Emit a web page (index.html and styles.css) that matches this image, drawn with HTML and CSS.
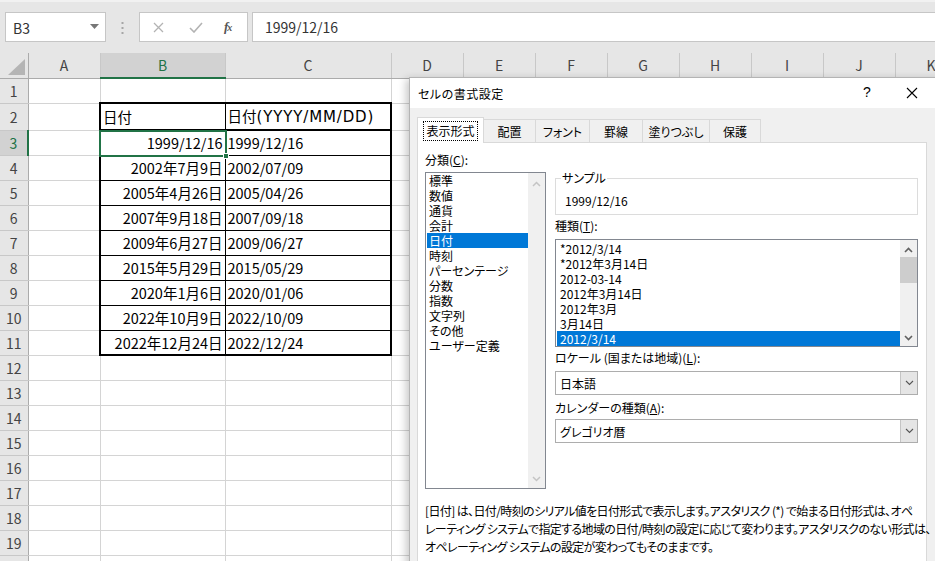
FILE: index.html
```html
<!DOCTYPE html>
<html lang="ja">
<head>
<meta charset="utf-8">
<title>Excel</title>
<link rel="stylesheet" href="styles.css">
</head>
<body>
<div class="app">
  <div class="fbar">
    <div class="namebox">
      <span class="nb-text">B3</span>
      <svg class="nb-arrow" width="9" height="5" viewBox="0 0 9 5"><polygon points="0,0 9,0 4.5,5" fill="#777"/></svg>
    </div>
    <svg class="vdots" width="3" height="12" viewBox="0 0 3 12"><rect x="0.5" y="0" width="2" height="2" fill="#a6a6a6"/><rect x="0.5" y="5" width="2" height="2" fill="#a6a6a6"/><rect x="0.5" y="10" width="2" height="2" fill="#a6a6a6"/></svg>
    <div class="fxbox">
      <svg width="11" height="11" viewBox="0 0 11 11"><path d="M1 1L10 10M10 1L1 10" stroke="#b3b3b3" stroke-width="1.3"/></svg>
      <svg width="14" height="11" viewBox="0 0 14 11"><path d="M1 6L5 10L13 1" stroke="#b3b3b3" stroke-width="1.6" fill="none"/></svg>
      <span class="fx">f<span class="fx-x">x</span></span>
    </div>
    <div class="finput">1999/12/16</div>
  </div>

  <table class="sheet">
    <colgroup>
      <col class="c-rh"><col class="c-a"><col class="c-b"><col class="c-c">
      <col class="c-n"><col class="c-n"><col class="c-n"><col class="c-n"><col class="c-n"><col class="c-n"><col class="c-n"><col class="c-n">
    </colgroup>
    <tr class="hdr">
      <th class="corner"><svg width="28" height="24" viewBox="0 0 28 24"><polygon points="25,6 25,22 8,22" fill="#b5b5b5"/></svg></th>
      <th>A</th><th class="sel-col">B</th><th>C</th><th>D</th><th>E</th><th>F</th><th>G</th><th>H</th><th>I</th><th>J</th><th>K</th>
    </tr>
    <tr><th class="rh">1</th><td></td><td></td><td></td><td></td><td></td><td></td><td></td><td></td><td></td><td></td><td></td></tr>
    <tr><th class="rh">2</th><td></td><td class="tb tl th-row">日付</td><td class="tb tr th-row">日付<span class="wide">(YYYY/MM/DD)</span></td><td></td><td></td><td></td><td></td><td></td><td></td><td></td><td></td></tr>
    <tr><th class="rh sel-row">3</th><td></td><td class="tb tl num active">1999/12/16<span class="cursor"><span class="handle"></span></span></td><td class="tb tr">1999/12/16</td><td></td><td></td><td></td><td></td><td></td><td></td><td></td><td></td></tr>
    <tr><th class="rh">4</th><td></td><td class="tb tl num">2002年7月9日</td><td class="tb tr">2002/07/09</td><td></td><td></td><td></td><td></td><td></td><td></td><td></td><td></td></tr>
    <tr><th class="rh">5</th><td></td><td class="tb tl num">2005年4月26日</td><td class="tb tr">2005/04/26</td><td></td><td></td><td></td><td></td><td></td><td></td><td></td><td></td></tr>
    <tr><th class="rh">6</th><td></td><td class="tb tl num">2007年9月18日</td><td class="tb tr">2007/09/18</td><td></td><td></td><td></td><td></td><td></td><td></td><td></td><td></td></tr>
    <tr><th class="rh">7</th><td></td><td class="tb tl num">2009年6月27日</td><td class="tb tr">2009/06/27</td><td></td><td></td><td></td><td></td><td></td><td></td><td></td><td></td></tr>
    <tr><th class="rh">8</th><td></td><td class="tb tl num">2015年5月29日</td><td class="tb tr">2015/05/29</td><td></td><td></td><td></td><td></td><td></td><td></td><td></td><td></td></tr>
    <tr><th class="rh">9</th><td></td><td class="tb tl num">2020年1月6日</td><td class="tb tr">2020/01/06</td><td></td><td></td><td></td><td></td><td></td><td></td><td></td><td></td></tr>
    <tr><th class="rh">10</th><td></td><td class="tb tl num">2022年10月9日</td><td class="tb tr">2022/10/09</td><td></td><td></td><td></td><td></td><td></td><td></td><td></td><td></td></tr>
    <tr><th class="rh">11</th><td></td><td class="tb tl bl num">2022年12月24日</td><td class="tb tr bl">2022/12/24</td><td></td><td></td><td></td><td></td><td></td><td></td><td></td><td></td></tr>
    <tr><th class="rh">12</th><td></td><td></td><td></td><td></td><td></td><td></td><td></td><td></td><td></td><td></td><td></td></tr>
    <tr><th class="rh">13</th><td></td><td></td><td></td><td></td><td></td><td></td><td></td><td></td><td></td><td></td><td></td></tr>
    <tr><th class="rh">14</th><td></td><td></td><td></td><td></td><td></td><td></td><td></td><td></td><td></td><td></td><td></td></tr>
    <tr><th class="rh">15</th><td></td><td></td><td></td><td></td><td></td><td></td><td></td><td></td><td></td><td></td><td></td></tr>
    <tr><th class="rh">16</th><td></td><td></td><td></td><td></td><td></td><td></td><td></td><td></td><td></td><td></td><td></td></tr>
    <tr><th class="rh">17</th><td></td><td></td><td></td><td></td><td></td><td></td><td></td><td></td><td></td><td></td><td></td></tr>
    <tr><th class="rh">18</th><td></td><td></td><td></td><td></td><td></td><td></td><td></td><td></td><td></td><td></td><td></td></tr>
    <tr><th class="rh">19</th><td></td><td></td><td></td><td></td><td></td><td></td><td></td><td></td><td></td><td></td><td></td></tr>
    <tr><th class="rh">20</th><td></td><td></td><td></td><td></td><td></td><td></td><td></td><td></td><td></td><td></td><td></td></tr>
  </table>

  <div class="dialog">
    <div class="titlebar">
      <span class="title">セルの書式設定</span>
      <span class="help">?</span>
      <svg class="close" width="12" height="12" viewBox="0 0 12 12"><path d="M1 1L11 11M11 1L1 11" stroke="#000" stroke-width="1.1"/></svg>
    </div>
    <div class="tabs">
      <div class="tab active"><span class="focus">表示形式</span></div>
      <div class="tab t2">配置</div>
      <div class="tab t3">フォント</div>
      <div class="tab t4">罫線</div>
      <div class="tab t5">塗りつぶし</div>
      <div class="tab t6">保護</div>
    </div>
    <div class="panel">
      <div class="cols">
        <div class="leftcol">
          <div class="lbl">分類(<u>C</u>):</div>
          <div class="catlist">
            <div class="items">
              <div class="item">標準</div>
              <div class="item">数値</div>
              <div class="item">通貨</div>
              <div class="item">会計</div>
              <div class="item selected">日付</div>
              <div class="item">時刻</div>
              <div class="item">パーセンテージ</div>
              <div class="item">分数</div>
              <div class="item">指数</div>
              <div class="item">文字列</div>
              <div class="item">その他</div>
              <div class="item">ユーザー定義</div>
            </div>
            <div class="vscroll dis">
              <svg width="9" height="6" viewBox="0 0 9 6"><polyline points="1,5 4.5,1.5 8,5" fill="none" stroke="#c4c4c4" stroke-width="1.5"/></svg>
              <svg width="9" height="6" viewBox="0 0 9 6"><polyline points="1,1 4.5,4.5 8,1" fill="none" stroke="#c4c4c4" stroke-width="1.5"/></svg>
            </div>
          </div>
        </div>
        <div class="rightcol">
          <fieldset class="sample">
            <legend>サンプル</legend>
            <div class="sample-val">1999/12/16</div>
          </fieldset>
          <div class="lbl l-type">種類(<u>T</u>):</div>
          <div class="typelist">
            <div class="items">
              <div class="item">*2012/3/14</div>
              <div class="item">*2012年3月14日</div>
              <div class="item">2012-03-14</div>
              <div class="item">2012年3月14日</div>
              <div class="item">2012年3月</div>
              <div class="item">3月14日</div>
              <div class="item selected">2012/3/14</div>
            </div>
            <div class="vscroll">
              <svg width="9" height="6" viewBox="0 0 9 6"><polyline points="1,5 4.5,1.5 8,5" fill="none" stroke="#606060" stroke-width="1.6"/></svg>
              <div class="thumb"></div>
              <div class="spacer"></div>
              <svg width="9" height="6" viewBox="0 0 9 6"><polyline points="1,1 4.5,4.5 8,1" fill="none" stroke="#606060" stroke-width="1.6"/></svg>
            </div>
          </div>
          <div class="lbl l-locale">ロケール (国または地域)(<u>L</u>):</div>
          <div class="select">
            <span class="sel-text">日本語</span>
            <span class="sel-btn"><svg width="9" height="6" viewBox="0 0 9 6"><polyline points="1,1 4.5,4.5 8,1" fill="none" stroke="#555" stroke-width="1.1"/></svg></span>
          </div>
          <div class="lbl l-cal">カレンダーの種類(<u>A</u>):</div>
          <div class="select s-cal">
            <span class="sel-text">グレゴリオ暦</span>
            <span class="sel-btn"><svg width="9" height="6" viewBox="0 0 9 6"><polyline points="1,1 4.5,4.5 8,1" fill="none" stroke="#555" stroke-width="1.1"/></svg></span>
          </div>
        </div>
      </div>
      <p class="desc">[日付] は、日付/時刻のシリアル値を日付形式で表示します。アスタリスク (*) で始まる日付形式は、オペ<br>レーティング システムで指定する地域の日付/時刻の設定に応じて変わります。アスタリスクのない形式は、<br>オペレーティング システムの設定が変わってもそのままです。</p>
    </div>
  </div>
</div>
</body>
</html>
```

FILE: styles.css
```css
* { box-sizing: border-box; }
html, body { margin: 0; padding: 0; }
body {
  width: 935px;
  height: 561px;
  overflow: hidden;
  background: #fff;
  font-family: "Noto Sans CJK JP", "Noto Sans", sans-serif;
}
.app {
  position: relative;
  width: 935px;
  height: 561px;
  overflow: hidden;
  background: #fff;
}

/* formula bar */
.fbar {
  height: 53px;
  background: #e6e6e6;
  border-top: 2px solid #f1f1f1;
  display: flex;
  align-items: flex-start;
  padding: 10px 0 0 5px;
}
.namebox {
  width: 101px;
  height: 30px;
  background: #fff;
  border: 1px solid #c6c6c6;
  display: flex;
  align-items: center;
  justify-content: space-between;
  padding: 0 6px 0 7px;
}
.nb-text { font-size: 14px; color: #333; line-height: 1; padding-top: 1px; }
.nb-arrow { margin-top: -2px; }
.vdots { margin: 10px 0 0 15px; }
.fxbox {
  margin-left: 15px;
  width: 109px;
  height: 30px;
  background: #fff;
  border: 1px solid #c6c6c6;
  display: flex;
  align-items: center;
  padding-left: 13px;
}
.fxbox svg:nth-child(1) { margin-right: 25px; }
.fxbox svg:nth-child(2) { margin-right: 21px; }
.fx {
  font-family: "Liberation Serif", serif;
  font-style: italic;
  font-weight: bold;
  font-size: 13px;
  color: #555;
  letter-spacing: -1px;
}
.fx-x { font-size: 10px; }
.finput {
  margin-left: 4px;
  flex: 1;
  height: 30px;
  background: #fff;
  border: 1px solid #c6c6c6;
  border-right: none;
  font-size: 14px;
  color: #333;
  line-height: 28px;
  padding-left: 12px;
}

/* sheet */
.sheet {
  border-collapse: collapse;
  table-layout: fixed;
  width: 967px;
  font-size: 14.5px;
  color: #000;
}
.c-rh { width: 28px; }
.c-a { width: 72px; }
.c-b { width: 125px; }
.c-c { width: 166px; }
.c-n { width: 72px; }
.sheet tr { height: 25px; }
.sheet th {
  font-weight: normal;
  background: #e6e6e6;
  color: #444;
  padding: 0;
  font-size: 14px;
}
.hdr th {
  border-right: 1px solid #c8c8c8;
  border-bottom: 1px solid #ababab;
  height: 25px;
  text-align: center;
}
.hdr th.corner {
  border-right: 1px solid #ababab;
  vertical-align: top;
}
.corner svg { display: block; }
.hdr th.sel-col {
  background: #d2d2d2;
  color: #217346;
  border-bottom: 2px solid #217346;
}
.rh {
  border-right: 1px solid #ababab;
  border-bottom: 1px solid #c8c8c8;
  text-align: center;
}
.rh.sel-row {
  background: #d2d2d2;
  color: #217346;
  border-right: 2px solid #217346;
}
.sheet td {
  border: 1px solid #d4d4d4;
  padding: 0 2px;
  white-space: nowrap;
  overflow: visible;
  line-height: 23px;
}
.sheet td.tb { border: 1px solid #000; }
.sheet td.tl { border-left: 2px solid #000; }
.sheet td.tr { border-right: 2px solid #000; }
.sheet td.th-row { border-top: 2px solid #000; border-bottom: 2px solid #000; }
.sheet td.bl { border-bottom: 2px solid #000; }
.sheet td.num { text-align: right; }
.wide {
  font-family: "DejaVu Sans", sans-serif;
  font-size: 15px;
  letter-spacing: 0.85px;
}
.sheet td.active { position: relative; }
.cursor {
  position: absolute;
  left: -2px;
  top: -1px;
  right: -2px;
  bottom: -2px;
  border: 2px solid #217346;
  pointer-events: none;
}
.handle {
  position: absolute;
  right: -4px;
  bottom: -4px;
  width: 6px;
  height: 6px;
  background: #217346;
  border: 1px solid #fff;
}

/* dialog */
.dialog {
  position: absolute;
  left: 409px;
  top: 77px;
  width: 540px;
  height: 500px;
  background: #f0f0f0;
  border: 1px solid #b4b4b4;
  box-shadow: -3px 2px 8px rgba(0,0,0,0.22);
  font-size: 12px;
  color: #000;
  font-feature-settings: "palt";
}
.titlebar {
  height: 30px;
  background: #fff;
  display: flex;
  align-items: center;
  padding-left: 8px;
  position: relative;
}
.title { font-size: 12px; letter-spacing: 0.5px; }
.help {
  position: absolute;
  left: 453px;
  top: 6px;
  font-family: "Liberation Sans", sans-serif;
  font-size: 14px;
}
.close {
  position: absolute;
  left: 496px;
  top: 9px;
}
.tabs {
  display: flex;
  align-items: flex-end;
  margin: 9px 0 0 7px;
  height: 25px;
}
.tab {
  height: 23px;
  border: 1px solid #d9d9d9;
  border-bottom: none;
  background: #f0f0f0;
  display: flex;
  align-items: center;
  justify-content: center;
  margin-left: -1px;
  font-size: 12px;
}
.tab.active {
  width: 67px;
  height: 26px;
  background: #fff;
  margin-left: 0;
  position: relative;
  z-index: 2;
  margin-bottom: -1px;
}
.focus {
  border: 1px dotted #000;
  padding: 1px 2px;
  line-height: 16px;
}
.t2 { width: 53px; }
.t3 { width: 55px; }
.t4 { width: 54px; }
.t5 { width: 68px; }
.t6 { width: 52px; }
.panel {
  margin-left: 7px;
  width: 510px;
  height: 420px;
  background: #fff;
  border: 1px solid #d9d9d9;
  padding: 8px 7px 0 7px;
  position: relative;
  z-index: 1;
}
.cols {
  display: flex;
  gap: 9px;
}
.leftcol { width: 121px; }
.lbl { line-height: 18px; height: 18px; white-space: nowrap; }
.catlist {
  margin-top: 3px;
  height: 317px;
  border: 1px solid #828790;
  display: flex;
}
.items { flex: 1; padding-left: 1px; }
.item {
  line-height: 15px;
  height: 15px;
  padding-left: 2px;
  white-space: nowrap;
}
.item.selected { background: #0078d7; color: #fff; }
.vscroll {
  width: 17px;
  background: #f0f0f0;
  display: flex;
  flex-direction: column;
  align-items: center;
  justify-content: space-between;
  padding: 8px 0 6px 0;
}
.rightcol { width: 363px; }
.sample {
  margin: 19px 0 0 0;
  padding: 7px 8px 5px 9px;
  border: 1px solid #dcdcdc;
  min-width: 0;
}
.sample legend {
  padding: 0 1px;
  margin-left: -4px;
  line-height: 16px;
  font-size: 12px;
}
.sample-val { line-height: 16px; }
.l-type { margin-top: 3px; line-height: 16px; height: 16px; }
.typelist {
  margin-top: 5px;
  height: 108px;
  border: 1px solid #828790;
  display: flex;
}
.typelist .items { padding-top: 1px; padding-left: 1px; }
.typelist .item { padding-left: 3px; }
.typelist .vscroll {
  justify-content: flex-start;
  padding: 7px 0 5px 0;
}
.thumb {
  width: 17px;
  height: 26px;
  background: #cdcdcd;
  margin-top: 4px;
}
.spacer { flex: 1; }
.l-locale { margin-top: 3px; line-height: 16px; height: 16px; }
.select {
  margin-top: 5px;
  height: 24px;
  border: 1px solid #adadad;
  background: #fff;
  display: flex;
  align-items: center;
  justify-content: space-between;
}
.sel-text { padding-left: 4px; }
.sel-btn {
  width: 17px;
  height: 22px;
  background: #e5e5e5;
  border-left: 1px solid #c4c4c4;
  display: flex;
  align-items: center;
  justify-content: center;
}
.l-cal { margin-top: 5px; line-height: 16px; height: 16px; }
.s-cal { margin-top: 3px; }
.desc {
  margin: 13px 0 0 0;
  line-height: 18px;
  white-space: nowrap;
  font-size: 12px;
  letter-spacing: -0.62px;
}
```
